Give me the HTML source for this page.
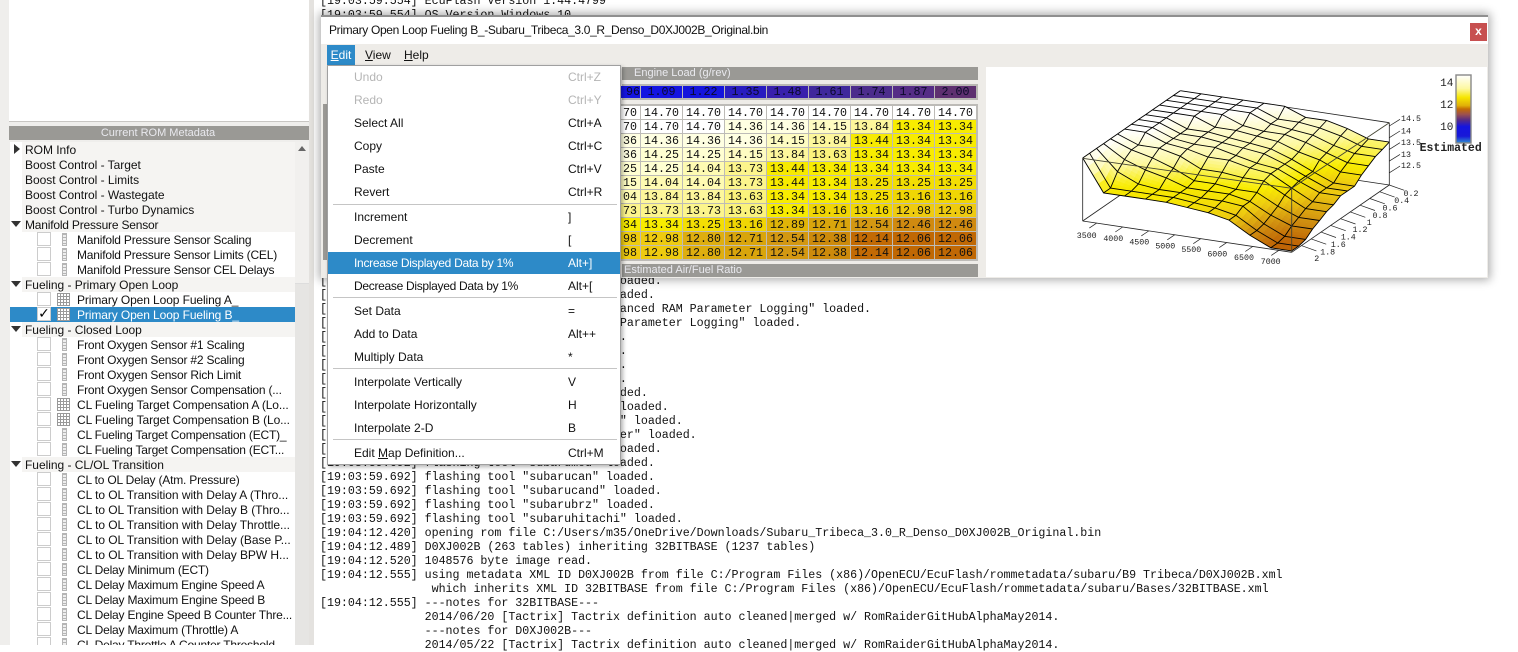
<!DOCTYPE html>
<html><head><meta charset="utf-8"><style>
html,body{margin:0;padding:0}
body{width:1518px;height:645px;overflow:hidden;position:relative;background:#fff;font-family:"Liberation Sans",sans-serif;font-size:12px;color:#111}
.a{position:absolute}
#lp{left:0;top:0;width:314px;height:645px;background:#efeeec}
#rb{left:309px;top:0;width:5px;height:645px;background:#e4e2df}
#top{left:9px;top:0;width:300px;height:122px;background:#fff;border-bottom:1px solid #c8c6c3;box-sizing:border-box}
.bar{background:#9a9995;color:#e9e9ee;text-align:center;line-height:14px;font-size:11px}
#tree{left:10px;top:142px;width:285px;height:503px;background:#fff;overflow:hidden}
.r{position:relative;height:15px;line-height:17px;white-space:nowrap;padding-left:67px;letter-spacing:-.2px}
.n{letter-spacing:-.05px}.h{letter-spacing:-.1px}
.g{background:#f5f4f2;margin-left:12px;padding-left:3px;letter-spacing:-.03px}
.g i{position:absolute;left:-11px;top:4px;width:0;height:0;border-style:solid;border-color:#333 transparent transparent;border-width:6px 5px 0}
.g i.t{top:2px;left:-8px;border-color:transparent transparent transparent #333;border-width:5px 0 5px 6px}
.c{position:absolute;left:27px;top:0;width:12px;height:12px;border:1px solid #ccc;background:#fff}
.ic{position:absolute;left:52px;top:1px;width:3px;height:11px;border:1px solid #b5b5b5;background:repeating-linear-gradient(#b5b5b5 0 1px,#eee 1px 3px)}
.gr{position:absolute;left:47px;top:1px;width:13px;height:13px;background-color:#fff;background-image:linear-gradient(#999 1px,transparent 1px),linear-gradient(90deg,#999 1px,transparent 1px);background-size:3px 3px;box-shadow:inset -1px -1px #999}
.sel{background:#2d8ac8;color:#fff}
#sb{left:295px;top:142px;width:14px;height:503px;background:#e6e5e3}
#log{left:320px;top:-6px;margin:0;font:11.67px/14px "Liberation Mono",monospace;letter-spacing:-.02px;color:#111;white-space:pre}
#win{left:321px;top:15px;width:1167px;height:263px;background:#eeece8;box-shadow:0 0 9px 2px rgba(0,0,0,.33)}
#title{left:321px;top:15px;width:1167px;height:29px;background:#fff;border-top:2px solid #8f8f8f;box-sizing:border-box;line-height:27px;padding-left:8px;font-size:12px;letter-spacing:-.34px}
#x{left:1470px;top:23px;width:17px;height:18px;background:#c75050;color:#fff;text-align:center;font:bold 12px/17px "Liberation Sans",sans-serif}
.m{top:45px;height:20px;line-height:21px}
#edit{left:327px;width:28px;top:45px;height:20px;background:#2d8ac8;color:#fff;text-align:center;line-height:21px}
#menu{left:327px;top:65px;width:294px;height:400px;background:#fff;border:1px solid #a0a0a0;box-sizing:border-box;box-shadow:2px 2px 4px rgba(0,0,0,.3)}
.it{position:absolute;left:0;width:292px;height:22px;line-height:22px}
.it span{position:absolute;left:26px}.it em{position:absolute;left:240px;font-style:normal}
.dis{color:#b5b5b5}.hi{background:#2d8ac8;color:#fff}
.sp{position:absolute;left:5px;width:284px;height:1px;background:#c5c5c5}
#hdr{left:622px;top:84px;width:356px;height:16px;background:#b9b7b3}
#tb{left:621px;top:104px;width:357px;height:157px;background:#bdbbb7;overflow:hidden}
.tr{position:absolute;left:-22px;height:13px;white-space:nowrap}
.tr b,.hc{display:block;float:left;width:41px;height:13px;margin-right:1px;text-align:center;font:11.67px/14px "Liberation Mono",monospace;color:#111}
.hc{position:absolute;top:86px;height:12px;line-height:12px;color:#0a0a2a}
.w{background:#fff}.p1{background:#ffffe2}.p2{background:#ffffd2}.p3{background:#fefcc2}.p4{background:#fefbb2}.p5{background:#fdf79c}.p6{background:#fcf58c}.p7{background:#fbf37c}
.y1{background:#f7ea00}.y2{background:#f8ec00}.y3{background:#f3de04}.y4{background:#f0d604}.y5{background:#eecb10}.o1{background:#dfb408}.o2{background:#deae10}.o3{background:#d9a50c}.o4{background:#d39812}.o5{background:#d08a10}.o6{background:#cc8a0c}.b1{background:#c26a04}.b2{background:#c06804}
#ch{left:986px;top:67px;width:501px;height:210px;background:#fff}
svg text{font-family:"Liberation Mono",monospace;font-size:8.3px;fill:#222;text-anchor:middle}
</style></head><body>
<div class="a" id="lp"></div><div class="a" id="rb"></div>
<div class="a" id="top"></div>
<div class="a bar" style="left:9px;top:126px;width:298px;height:14px">Current ROM Metadata</div>
<div class="a" style="left:307px;top:126px;width:2px;height:14px;background:#9a9995"></div>
<div class="a" id="tree">
<div class="r g"><i class="t"></i>ROM Info</div>
<div class="r g">Boost Control - Target</div>
<div class="r g">Boost Control - Limits</div>
<div class="r g">Boost Control - Wastegate</div>
<div class="r g">Boost Control - Turbo Dynamics</div>
<div class="r g" style="letter-spacing:-.2px"><i></i>Manifold Pressure Sensor</div>
<div class="r"><s class="c"></s><s class="ic"></s>Manifold Pressure Sensor Scaling</div>
<div class="r"><s class="c"></s><s class="ic"></s>Manifold Pressure Sensor Limits (CEL)</div>
<div class="r"><s class="c"></s><s class="ic"></s>Manifold Pressure Sensor CEL Delays</div>
<div class="r g"><i></i>Fueling - Primary Open Loop</div>
<div class="r h"><s class="c"></s><s class="gr"></s>Primary Open Loop Fueling A_</div>
<div class="r sel h"><s class="c" style="text-decoration:none;color:#000;font:bold 14px/12px 'DejaVu Sans',sans-serif;text-align:center">✓</s><s class="gr"></s>Primary Open Loop Fueling B_</div>
<div class="r g"><i></i>Fueling - Closed Loop</div>
<div class="r"><s class="c"></s><s class="ic"></s>Front Oxygen Sensor #1 Scaling</div>
<div class="r"><s class="c"></s><s class="ic"></s>Front Oxygen Sensor #2 Scaling</div>
<div class="r"><s class="c"></s><s class="ic"></s>Front Oxygen Sensor Rich Limit</div>
<div class="r"><s class="c"></s><s class="ic"></s>Front Oxygen Sensor Compensation (...</div>
<div class="r h"><s class="c"></s><s class="gr"></s>CL Fueling Target Compensation A (Lo...</div>
<div class="r h"><s class="c"></s><s class="gr"></s>CL Fueling Target Compensation B (Lo...</div>
<div class="r"><s class="c"></s><s class="ic"></s>CL Fueling Target Compensation (ECT)_</div>
<div class="r"><s class="c"></s><s class="ic"></s>CL Fueling Target Compensation (ECT...</div>
<div class="r g"><i></i>Fueling - CL/OL Transition</div>
<div class="r"><s class="c"></s><s class="ic"></s>CL to OL Delay (Atm. Pressure)</div>
<div class="r n"><s class="c"></s><s class="ic"></s>CL to OL Transition with Delay A (Thro...</div>
<div class="r n"><s class="c"></s><s class="ic"></s>CL to OL Transition with Delay B (Thro...</div>
<div class="r n"><s class="c"></s><s class="ic"></s>CL to OL Transition with Delay Throttle...</div>
<div class="r n"><s class="c"></s><s class="ic"></s>CL to OL Transition with Delay (Base P...</div>
<div class="r n"><s class="c"></s><s class="ic"></s>CL to OL Transition with Delay BPW H...</div>
<div class="r"><s class="c"></s><s class="ic"></s>CL Delay Minimum (ECT)</div>
<div class="r"><s class="c"></s><s class="ic"></s>CL Delay Maximum Engine Speed A</div>
<div class="r"><s class="c"></s><s class="ic"></s>CL Delay Maximum Engine Speed B</div>
<div class="r"><s class="c"></s><s class="ic"></s>CL Delay Engine Speed B Counter Thre...</div>
<div class="r"><s class="c"></s><s class="ic"></s>CL Delay Maximum (Throttle) A</div>
<div class="r"><s class="c"></s><s class="ic"></s>CL Delay Throttle A Counter Threshold</div>
</div>
<div class="a" id="sb"><div style="height:141px;background:#f1f0ee;border-bottom:1px solid #ddd"></div><div class="a" style="left:3px;top:4px;border:solid transparent;border-width:0 4px 5px;border-bottom-color:#666"></div></div>

<pre class="a" id="log">[19:03:59.554] EcuFlash Version 1.44.4799
[19:03:59.554] OS Version Windows 10


















[19:03:59.692] flashing tool "subarumisc" loaded.
[19:03:59.692] flashing tool "subarunew" loaded.
[19:03:59.692] logging protocol "Subaru Advanced RAM Parameter Logging" loaded.
[19:03:59.692] logging support "Subaru RAM Parameter Logging" loaded.
[19:03:59.692] flashing tool "denso" loaded.
[19:03:59.692] flashing tool "denso" loaded.
[19:03:59.692] flashing tool "denso" loaded.
[19:03:59.692] flashing tool "denso" loaded.
[19:03:59.692] flashing tool "subaruwr" loaded.
[19:03:59.692] flashing tool "subarurally" loaded.
[19:03:59.692] flashing tool "subarukwpflap" loaded.
[19:03:59.692] flashing tool "subarukwpflaser" loaded.
[19:03:59.692] flashing tool "subarudens" loaded.
[19:03:59.692] flashing tool "subarumod" loaded.
[19:03:59.692] flashing tool "subarucan" loaded.
[19:03:59.692] flashing tool "subarucand" loaded.
[19:03:59.692] flashing tool "subarubrz" loaded.
[19:03:59.692] flashing tool "subaruhitachi" loaded.
[19:04:12.420] opening rom file C:/Users/m35/OneDrive/Downloads/Subaru_Tribeca_3.0_R_Denso_D0XJ002B_Original.bin
[19:04:12.489] D0XJ002B (263 tables) inheriting 32BITBASE (1237 tables)
[19:04:12.520] 1048576 byte image read.
[19:04:12.555] using metadata XML ID D0XJ002B from file C:/Program Files (x86)/OpenECU/EcuFlash/rommetadata/subaru/B9 Tribeca/D0XJ002B.xml
                which inherits XML ID 32BITBASE from file C:/Program Files (x86)/OpenECU/EcuFlash/rommetadata/subaru/Bases/32BITBASE.xml
[19:04:12.555] ---notes for 32BITBASE---
               2014/06/20 [Tactrix] Tactrix definition auto cleaned|merged w/ RomRaiderGitHubAlphaMay2014.
               ---notes for D0XJ002B---
               2014/05/22 [Tactrix] Tactrix definition auto cleaned|merged w/ RomRaiderGitHubAlphaMay2014.</pre>

<div class="a" id="win"></div>
<div class="a" id="title">Primary Open Loop Fueling B_-Subaru_Tribeca_3.0_R_Denso_D0XJ002B_Original.bin</div>
<div class="a" id="x">x</div>
<div class="a" id="edit"><u>E</u>dit</div>
<div class="a m" style="left:365px"><u>V</u>iew</div>
<div class="a m" style="left:404px"><u>H</u>elp</div>

<div class="a" style="left:323px;top:104px;width:5px;height:156px;background:#9a9995"></div>
<div class="a bar" style="left:622px;top:67px;width:356px;height:13px;text-align:left;text-indent:12px;line-height:13px">Engine Load (g/rev)</div>
<div class="a" id="hdr"></div>
<div class="a hc" style="left:621px;width:19px;background:#1414e0;text-align:right;overflow:hidden">96</div>
<div class="a hc" style="left:641px;background:#1414e2">1.09</div>
<div class="a hc" style="left:683px;background:#1414dc">1.22</div>
<div class="a hc" style="left:725px;background:#281cc0">1.35</div>
<div class="a hc" style="left:767px;background:#3820ac">1.48</div>
<div class="a hc" style="left:809px;background:#3f289c">1.61</div>
<div class="a hc" style="left:851px;background:#4c2c8c">1.74</div>
<div class="a hc" style="left:893px;background:#552c86">1.87</div>
<div class="a hc" style="left:935px;background:#5e3070">2.00</div>

<div class="a" id="tb">
<div class="tr" style="top:2px"><b class="w">14.70</b><b class="w">14.70</b><b class="w">14.70</b><b class="w">14.70</b><b class="w">14.70</b><b class="w">14.70</b><b class="w">14.70</b><b class="w">14.70</b><b class="w">14.70</b></div>
<div class="tr" style="top:16px"><b class="w">14.70</b><b class="w">14.70</b><b class="w">14.70</b><b class="p1">14.36</b><b class="p1">14.36</b><b class="p3">14.15</b><b class="p5">13.84</b><b class="y2">13.34</b><b class="y2">13.34</b></div>
<div class="tr" style="top:30px"><b class="p1">14.36</b><b class="p1">14.36</b><b class="p1">14.36</b><b class="p1">14.36</b><b class="p3">14.15</b><b class="p5">13.84</b><b class="y1">13.44</b><b class="y2">13.34</b><b class="y2">13.34</b></div>
<div class="tr" style="top:44px"><b class="p1">14.36</b><b class="p2">14.25</b><b class="p2">14.25</b><b class="p3">14.15</b><b class="p5">13.84</b><b class="p7">13.63</b><b class="y2">13.34</b><b class="y2">13.34</b><b class="y2">13.34</b></div>
<div class="tr" style="top:58px"><b class="p2">14.25</b><b class="p2">14.25</b><b class="p4">14.04</b><b class="p6">13.73</b><b class="y1">13.44</b><b class="y2">13.34</b><b class="y2">13.34</b><b class="y2">13.34</b><b class="y2">13.34</b></div>
<div class="tr" style="top:72px"><b class="p3">14.15</b><b class="p4">14.04</b><b class="p4">14.04</b><b class="p6">13.73</b><b class="y1">13.44</b><b class="y2">13.34</b><b class="y3">13.25</b><b class="y3">13.25</b><b class="y3">13.25</b></div>
<div class="tr" style="top:86px"><b class="p4">14.04</b><b class="p5">13.84</b><b class="p5">13.84</b><b class="p7">13.63</b><b class="y2">13.34</b><b class="y2">13.34</b><b class="y3">13.25</b><b class="y4">13.16</b><b class="y4">13.16</b></div>
<div class="tr" style="top:100px"><b class="p6">13.73</b><b class="p6">13.73</b><b class="p6">13.73</b><b class="p7">13.63</b><b class="y2">13.34</b><b class="y4">13.16</b><b class="y4">13.16</b><b class="y5">12.98</b><b class="y5">12.98</b></div>
<div class="tr" style="top:114px"><b class="y2">13.34</b><b class="y2">13.34</b><b class="y3">13.25</b><b class="y4">13.16</b><b class="o1">12.89</b><b class="o3">12.71</b><b class="o4">12.54</b><b class="o5">12.46</b><b class="o5">12.46</b></div>
<div class="tr" style="top:128px"><b class="y5">12.98</b><b class="y5">12.98</b><b class="o2">12.80</b><b class="o3">12.71</b><b class="o4">12.54</b><b class="o6">12.38</b><b class="b1">12.14</b><b class="b2">12.06</b><b class="b2">12.06</b></div>
<div class="tr" style="top:142px"><b class="y5">12.98</b><b class="y5">12.98</b><b class="o2">12.80</b><b class="o3">12.71</b><b class="o4">12.54</b><b class="o6">12.38</b><b class="b1">12.14</b><b class="b2">12.06</b><b class="b2">12.06</b></div>
</div>
<div class="a bar" style="left:622px;top:264px;width:356px;height:13px;text-align:left;text-indent:2px;line-height:13px">Estimated Air/Fuel Ratio</div>

<div class="a" id="ch">
<svg id="sv" width="501" height="210" viewBox="986 67 501 210" style="display:block">
<defs><linearGradient id="lg" x1="0" y1="0" x2="0" y2="1">
<stop offset="0" stop-color="#fff"/><stop offset=".2" stop-color="#fdf8a0"/><stop offset=".33" stop-color="#f6e600"/><stop offset=".45" stop-color="#e0b008"/><stop offset=".5" stop-color="#c46c04"/><stop offset=".58" stop-color="#9c5050"/><stop offset=".66" stop-color="#582c84"/><stop offset=".76" stop-color="#1414e0"/><stop offset=".9" stop-color="#1818d8"/><stop offset="1" stop-color="#3090d0"/></linearGradient></defs>
<g id="plot"></g>
<rect x="1456" y="75" width="15" height="68" fill="url(#lg)" stroke="#888" stroke-width="1.4"/>
<g style="font-size:8px">
<text x="1086.7" y="238">3500</text><text x="1113.3" y="241">4000</text><text x="1139.3" y="244.5">4500</text><text x="1165.3" y="248.5">5000</text><text x="1191.3" y="252">5500</text><text x="1217.3" y="256.5">6000</text><text x="1244" y="260">6500</text><text x="1270.7" y="264">7000</text>
<text x="1411" y="121">14.5</text><text x="1406" y="133.5">14</text><text x="1411" y="145">13.5</text><text x="1406" y="157">13</text><text x="1411" y="168">12.5</text>
<text x="1411" y="196">0.2</text><text x="1401.7" y="203">0.4</text><text x="1390" y="210.5">0.6</text><text x="1380" y="218">0.8</text><text x="1369.3" y="225">1</text><text x="1360" y="232">1.2</text><text x="1348.3" y="239.5">1.4</text><text x="1338.3" y="247">1.6</text><text x="1327.7" y="254.5">1.8</text><text x="1316.7" y="261">2</text>
</g>
<text x="1446.7" y="86" style="font-size:11px">14</text><text x="1446.7" y="108" style="font-size:11px">12</text><text x="1446.7" y="130" style="font-size:11px">10</text>
<text x="1450.7" y="151" style="font-size:11.5px;font-weight:bold">Estimated</text>
</svg></div>

<div class="a" id="menu">
<div class="it dis" style="top:0"><span>Undo</span><em>Ctrl+Z</em></div>
<div class="it dis" style="top:23px"><span>Redo</span><em>Ctrl+Y</em></div>
<div class="it" style="top:46px"><span>Select All</span><em>Ctrl+A</em></div>
<div class="it" style="top:69px"><span>Copy</span><em>Ctrl+C</em></div>
<div class="it" style="top:92px"><span>Paste</span><em>Ctrl+V</em></div>
<div class="it" style="top:115px"><span>Revert</span><em>Ctrl+R</em></div>
<div class="sp" style="top:138px"></div>
<div class="it" style="top:140px"><span>Increment</span><em>]</em></div>
<div class="it" style="top:163px"><span>Decrement</span><em>[</em></div>
<div class="it hi" style="top:186px"><span style="letter-spacing:-.28px">Increase Displayed Data by 1%</span><em>Alt+]</em></div>
<div class="it" style="top:209px"><span style="letter-spacing:-.3px">Decrease Displayed Data by 1%</span><em>Alt+[</em></div>
<div class="sp" style="top:231px"></div>
<div class="it" style="top:234px"><span>Set Data</span><em>=</em></div>
<div class="it" style="top:257px"><span>Add to Data</span><em>Alt++</em></div>
<div class="it" style="top:280px"><span>Multiply Data</span><em>*</em></div>
<div class="sp" style="top:302px"></div>
<div class="it" style="top:305px"><span>Interpolate Vertically</span><em>V</em></div>
<div class="it" style="top:328px"><span>Interpolate Horizontally</span><em>H</em></div>
<div class="it" style="top:351px"><span>Interpolate 2-D</span><em>B</em></div>
<div class="sp" style="top:373px"></div>
<div class="it" style="top:376px"><span>Edit <u>M</u>ap Definition...</span><em>Ctrl+M</em></div>
</div>

<script>
(function(){
var D=[
[14.7,14.7,14.7,14.7,14.7,14.7,14.7,14.7,14.7,14.7,14.7,14.7,14.7,14.7,14.7],
[14.7,14.7,14.7,14.7,14.7,14.7,14.7,14.7,14.7,14.36,14.36,14.15,13.84,13.34,13.34],
[14.7,14.7,14.7,14.7,14.7,14.36,14.36,14.36,14.36,14.36,14.15,13.84,13.44,13.34,13.34],
[14.7,14.7,14.7,14.7,14.36,14.36,14.36,14.25,14.25,14.15,13.84,13.63,13.34,13.34,13.34],
[14.7,14.7,14.7,14.36,14.36,14.25,14.25,14.25,14.04,13.73,13.44,13.34,13.34,13.34,13.34],
[14.7,14.36,14.36,14.25,14.25,14.15,14.15,14.04,14.04,13.73,13.44,13.34,13.25,13.25,13.25],
[14.36,14.36,14.25,14.25,14.15,14.04,14.04,13.84,13.84,13.63,13.34,13.34,13.25,13.16,13.16],
[14.36,14.25,14.15,14.04,13.84,13.73,13.73,13.73,13.73,13.63,13.34,13.16,13.16,12.98,12.98],
[14.15,14.04,13.84,13.73,13.63,13.34,13.34,13.34,13.25,13.16,12.89,12.71,12.54,12.46,12.46],
[13.84,13.73,13.63,13.44,13.25,12.98,12.98,12.98,12.8,12.71,12.54,12.38,12.14,12.06,12.06],
[13.84,13.73,13.63,13.44,13.25,12.98,12.98,12.98,12.8,12.71,12.54,12.38,12.14,12.06,12.06]];
var st=[[12.06,191,100,5],[12.5,208,144,16],[13,238,203,16],[13.4,248,236,0],[14,253,248,160],[14.7,255,255,255]];
function col(z){for(var i=1;i<st.length;i++){if(z<=st[i][0]){var a=st[i-1],b=st[i],t=Math.max(0,(z-a[0])/(b[0]-a[0]));
return'rgb('+[1,2,3].map(function(k){return Math.round(a[k]+(b[k]-a[k])*t)}).join(',')+')'}}return'#fff'}
function Z(x,y){return[1060+x/3,60+y/3]}
function P(u,v,z){return Z(361+u*627-v*293,281+u*94+v*202-(z-12)*70)}
function L(a,b,w,c){var p=Z(a[0],a[1]),q=Z(b[0],b[1]);return'<line x1="'+p[0].toFixed(1)+'" y1="'+p[1].toFixed(1)+'" x2="'+q[0].toFixed(1)+'" y2="'+q[1].toFixed(1)+'" stroke="'+(c||'#222')+'" stroke-width="'+(w||.8)+'"/>'}
var h='',B=[361,281],Bt=[360,93],Lf=[68,483],Lt=[68,295],F=[695,577],Ft=[695,385],R=[988,375],Rt=[988,188];
h+=L(Bt,Rt)+L(Bt,Lt)+L(Rt,R)+L(Lt,Lf)+L(Lf,F)+L(F,R)+L(Lf,B)+L(R,B);
var i,j,s,t,N=4;
function zv(r,c,a,b){return D[r][c]*(1-a)*(1-b)+D[r+1][c]*a*(1-b)+D[r][c+1]*(1-a)*b+D[r+1][c+1]*a*b}
for(i=0;i<10;i++)for(j=0;j<14;j++)for(s=0;s<N;s++)for(t=0;t<N;t++){
var a0=s/N,a1=(s+1)/N,b0=t/N,b1=(t+1)/N;
var pts=[[a0,b0],[a1,b0],[a1,b1],[a0,b1]].map(function(q){return P((i+q[0])/10,(j+q[1])/14,zv(i,j,q[0],q[1])).map(function(n){return n.toFixed(1)}).join(',')}).join(' ');
var cc=col(zv(i,j,(a0+a1)/2,(b0+b1)/2));
h+='<polygon points="'+pts+'" fill="'+cc+'" stroke="'+cc+'" stroke-width=".5"/>'}
for(i=0;i<=10;i++){var a=[];for(j=0;j<=14;j++)a.push(P(i/10,j/14,D[i][j]).map(function(n){return n.toFixed(1)}).join(','));h+='<polyline points="'+a.join(' ')+'" fill="none" stroke="#000" stroke-width=".9"/>'}
for(j=0;j<=14;j++){var a=[];for(i=0;i<=10;i++)a.push(P(i/10,j/14,D[i][j]).map(function(n){return n.toFixed(1)}).join(','));h+='<polyline points="'+a.join(' ')+'" fill="none" stroke="#000" stroke-width=".9"/>'}
h+=L(Lt,Ft,.9,'#443')+L(Ft,Rt,.9,'#443')+L(Ft,F,.9,'#443');
for(i=0;i<8;i++){var x=110+78*i,y=483+(42+78*i)*.15;h+=L([x,y],[x-22,y+15],.7)}
for(i=0;i<5;i++){var y=198+35.1*i;h+=L([988,y],[1020,y-20],.7)}
for(i=0;i<10;i++){var x=988-29.3*i,y=375+20.2*i;h+=L([x,y],[x+45,y+16],.7)}
document.getElementById('plot').innerHTML=h;
})();
</script>
</body></html>
